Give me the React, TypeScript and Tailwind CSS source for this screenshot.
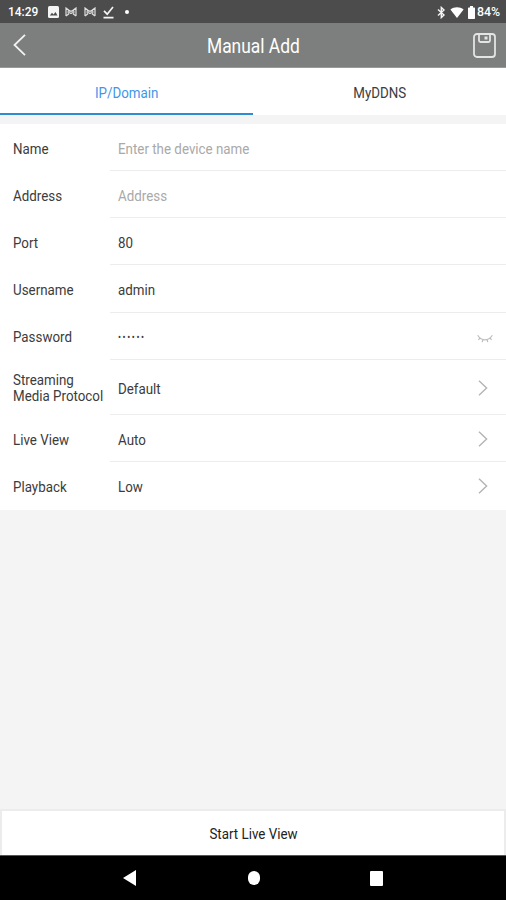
import { useState } from 'react'
import { clsx } from 'clsx'

type Field = {
  label: string
  value?: string
  placeholder?: string
  height: string
  action?: 'select' | 'reveal'
}

const fields: Field[] = [
  { label: 'Name', placeholder: 'Enter the device name', height: 'h-[47px]' },
  { label: 'Address', placeholder: 'Address', height: 'h-[47px]' },
  { label: 'Port', value: '80', height: 'h-[47px]' },
  { label: 'Username', value: 'admin', height: 'h-12' },
  { label: 'Password', value: '••••••', height: 'h-[47px]', action: 'reveal' },
  { label: 'Streaming\nMedia Protocol', value: 'Default', height: 'h-[55px]', action: 'select' },
  { label: 'Live View', value: 'Auto', height: 'h-[47px]', action: 'select' },
  { label: 'Playback', value: 'Low', height: 'h-12', action: 'select' },
]

function ChevronRight() {
  return (
    <svg width="10" height="16" viewBox="0 0 10 16" fill="none" stroke="#b4b4b4" strokeWidth="1.4">
      <path d="M1 .8 8.6 8 1 15.2" />
    </svg>
  )
}

function ClosedEye() {
  return (
    <svg width="16" height="10" viewBox="0 0 16 10" fill="none" stroke="#bcbcbc" strokeWidth="1.2">
      <path d="M.7 1.2C2.5 4 5 5.8 8 5.8s5.500-1.800 7.300-4.600M2.900 3.700 1.500 6M6 5.500 5.200 8.200M10 5.500l.8 2.700M13.100 3.700 14.500 6" />
    </svg>
  )
}

function BowTie() {
  return (
    <svg width="12" height="10" viewBox="0 0 12 10" fill="none" stroke="#dedede" strokeWidth="1.2">
      <path d="M1 9V1l4 3M11 9V1L7 4M1 9l3-2.200M11 9 8 6.800M3.200 3.600v3M8.800 3.600v3" />
      <circle cx="6" cy="5.200" r="1.300" />
    </svg>
  )
}

function StatusBar() {
  return (
    <div className="flex h-[23px] items-center bg-[#4c4c4c] pt-px pl-2 pr-1.5 text-white">
      <span className="w-[40px] text-[13px] font-medium">
        <span className="inline-block origin-left scale-x-[0.92]">14:29</span>
      </span>
      <svg width="11" height="12" viewBox="0 0 11 12">
        <rect width="11" height="12" rx="1.500" fill="#f4f4f4" />
        <path d="M1.800 9.500 4 6.800l1.500 1.700L7.500 6l2 3.500z" fill="#4c4c4c" />
      </svg>
      <span className="ml-[6px] flex gap-[7px]">
        <BowTie />
        <BowTie />
      </span>
      <svg className="ml-[7px]" width="11" height="13" viewBox="0 0 11 13" fill="none" stroke="#f4f4f4" strokeWidth="1.700">
        <path d="M1 4.800 4.200 8.200 10 1M.5 11.700h10" />
      </svg>
      <span className="ml-[11px] size-1 rounded-full bg-white" />
      <span className="ml-auto flex items-center">
        <svg width="9" height="13" viewBox="0 0 9 13" fill="none" stroke="#f4f4f4" strokeWidth="1.400">
          <path d="M1 3.500 7 9 4.300 11.600V1.400L7 4 1 9.500" />
        </svg>
        <svg className="ml-[4px]" width="14" height="11" viewBox="0 0 14 11" fill="#fff">
          <path d="M7 11 .4 2.500C4-.5 10-.5 13.600 2.500z" />
        </svg>
        <svg className="ml-[4px]" width="7" height="13" viewBox="0 0 7 13" fill="#fff">
          <path d="M2 0h3v1.500h1.300q.7 0 .7.700v10q0 .8-.7.800H.7q-.7 0-.7-.8v-10q0-.7.700-.7H2z" />
        </svg>
        <span className="ml-[2px] w-[23px] text-[13px] font-medium">
          <span className="inline-block origin-left scale-x-[0.95]">84%</span>
        </span>
      </span>
    </div>
  )
}

function Header() {
  return (
    <header className="flex h-[45px] items-center justify-between border-b border-[#9a9a9a] bg-[#7d7f7e] pl-[12px] pr-[10px] text-white">
      <svg width="22" height="22" viewBox="0 0 22 22" fill="none" stroke="#f2f2f2" strokeWidth="1.800">
        <path d="M13 .8 2.500 11 13 21.200" />
      </svg>
      <h1 className="pt-px text-[20px]">
        <span className="inline-block scale-x-[0.87]">Manual Add</span>
      </h1>
      <svg width="23" height="25" viewBox="0 0 23 25" fill="none" stroke="#e4e4e4" strokeWidth="1.800">
        <rect x="1" y="1" width="21" height="23" rx="3" />
        <path d="M6 1v6.500Q6 9 7.500 9h8Q17 9 17 7.500V1" />
        <rect x="11.500" y="3.500" width="3" height="3" fill="#e4e4e4" stroke="none" />
      </svg>
    </header>
  )
}

function FieldRow({ field }: { field: Field }) {
  const isPassword = field.action === 'reveal'
  return (
    <div className={clsx('group flex', field.height)}>
      <div
        className={clsx(
          'flex w-[110px] shrink-0 items-center pl-[13px]',
          isPassword || field.label.includes('\n') ? 'pt-px' : 'pt-[2px]',
        )}
      >
        <span className="origin-left scale-x-[0.89] whitespace-pre leading-4">{field.label}</span>
      </div>
      <div className="flex flex-1 items-center justify-between border-b border-[#ededed] pt-px pl-2 group-last:border-transparent">
        <span
          className={clsx(
            'origin-left scale-x-[0.89]',
            field.placeholder && 'text-[#a9a9a9]',
            isPassword ? 'pt-px text-[10px] tracking-[1.800px]' : 'pt-[3px]',
          )}
        >
          {field.value ?? field.placeholder}
        </span>
        {isPassword && (
          <span className="mr-[13px] pt-[4px]">
            <ClosedEye />
          </span>
        )}
        {field.action === 'select' && (
          <span className="mr-[18px]">
            <ChevronRight />
          </span>
        )}
      </div>
    </div>
  )
}

function App() {
  const [tab, setTab] = useState('IP/Domain')

  return (
    <div className="flex h-[900px] w-[506px] flex-col overflow-hidden bg-[#f4f4f4] font-['Roboto',sans-serif] text-[15px] text-[#3c3c3c]">
      <StatusBar />
      <Header />

      <div className="flex h-[47px] bg-white">
        {['IP/Domain', 'MyDDNS'].map((name) => (
          <button
            key={name}
            onClick={() => setTab(name)}
            className={clsx(
              'flex-1 border-b-2 pt-[5px]',
              tab === name ? 'border-[#2f8cd0] text-[#3f96ea]' : 'border-transparent',
            )}
          >
            <span className="inline-block scale-x-[0.89]">{name}</span>
          </button>
        ))}
      </div>

      <div className="mt-[9px] bg-white">
        {fields.map((field) => (
          <FieldRow key={field.label} field={field} />
        ))}
      </div>

      <button className="mt-auto h-[46px] border-2 border-b-0 border-[#ececec] bg-white pt-[2px] pl-[2px] text-[#222]">
        <span className="inline-block scale-x-[0.89]">Start Live View</span>
      </button>

      <nav className="flex h-[45px] items-center border-t border-[#555] bg-black pl-[123px]">
        <svg width="13" height="16" viewBox="0 0 13 16" fill="#fff">
          <path d="M13 0v16L0 8z" />
        </svg>
        <span className="ml-[112px] h-[14px] w-[12px] rounded-full bg-white" />
        <span className="ml-[110px] h-[15px] w-[13px] rounded-[1px] bg-white" />
      </nav>
    </div>
  )
}

export default App
